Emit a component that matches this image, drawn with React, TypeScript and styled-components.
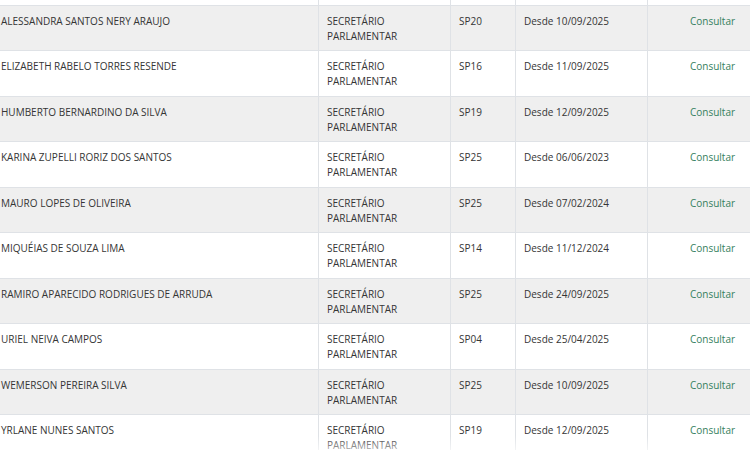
import React from "react";
import styled, { createGlobalStyle } from "styled-components";

const Global = createGlobalStyle`
  html, body { margin: 0; padding: 0; background: #fff; overflow: hidden; }
  body { width: 750px; height: 450px; }
`;

const Viewport = styled.div`
  width: 750px;
  height: 450px;
  overflow: hidden;
  position: relative;
`;

const Table = styled.table`
  border-collapse: collapse;
  table-layout: fixed;
  width: 785px;
  margin-left: -8px;
  margin-top: -41px;
  font-family: "Open Sans", "Noto Sans", sans-serif;
  font-size: 10px;
  line-height: 15px;
  color: #353535;
`;

const Row = styled.tr<{ $shade: boolean }>`
  height: 45.5px;
  background: ${(p) => (p.$shade ? "#efefef" : "#ffffff")};
`;

const Cell = styled.td<{ $center?: boolean }>`
  border: 1px solid #dfe2e6;
  padding: 8px 8px 6px 8px;
  vertical-align: top;
  text-align: ${(p) => (p.$center ? "center" : "left")};
  box-sizing: border-box;
`;

const Link = styled.a`
  color: #35805e;
  text-decoration: none;
`;

const Fade = styled.div`
  position: absolute;
  left: 0;
  right: 0;
  bottom: 0;
  height: 14px;
  background: linear-gradient(to bottom, rgba(255,255,255,0), rgba(255,255,255,0.6));
  pointer-events: none;
`;

const rows: [string, string, string][] = [
  ["", "", ""],
  ["ALESSANDRA SANTOS NERY ARAUJO", "SP20", "10/09/2025"],
  ["ELIZABETH RABELO TORRES RESENDE", "SP16", "11/09/2025"],
  ["HUMBERTO BERNARDINO DA SILVA", "SP19", "12/09/2025"],
  ["KARINA ZUPELLI RORIZ DOS SANTOS", "SP25", "06/06/2023"],
  ["MAURO LOPES DE OLIVEIRA", "SP25", "07/02/2024"],
  ["MIQUÉIAS DE SOUZA LIMA", "SP14", "11/12/2024"],
  ["RAMIRO APARECIDO RODRIGUES DE ARRUDA", "SP25", "24/09/2025"],
  ["URIEL NEIVA CAMPOS", "SP04", "25/04/2025"],
  ["WEMERSON PEREIRA SILVA", "SP25", "10/09/2025"],
  ["YRLANE NUNES SANTOS", "SP19", "12/09/2025"],
];

export default function App() {
  return (
    <Viewport>
      <Global />
      <Table>
        <colgroup>
          <col style={{ width: 326 }} />
          <col style={{ width: 132 }} />
          <col style={{ width: 65 }} />
          <col style={{ width: 132 }} />
          <col style={{ width: 130 }} />
        </colgroup>
        <tbody>
          {rows.map(([name, sp, date], i) => (
            <Row key={i} $shade={i % 2 === 1}>
              <Cell>{name}</Cell>
              <Cell>
                {name && (
                  <>
                    SECRETÁRIO
                    <br />
                    PARLAMENTAR
                  </>
                )}
              </Cell>
              <Cell>{sp}</Cell>
              <Cell>{date && `Desde ${date}`}</Cell>
              <Cell $center>{name && <Link href="#">Consultar</Link>}</Cell>
            </Row>
          ))}
        </tbody>
      </Table>
      <Fade />
    </Viewport>
  );
}
